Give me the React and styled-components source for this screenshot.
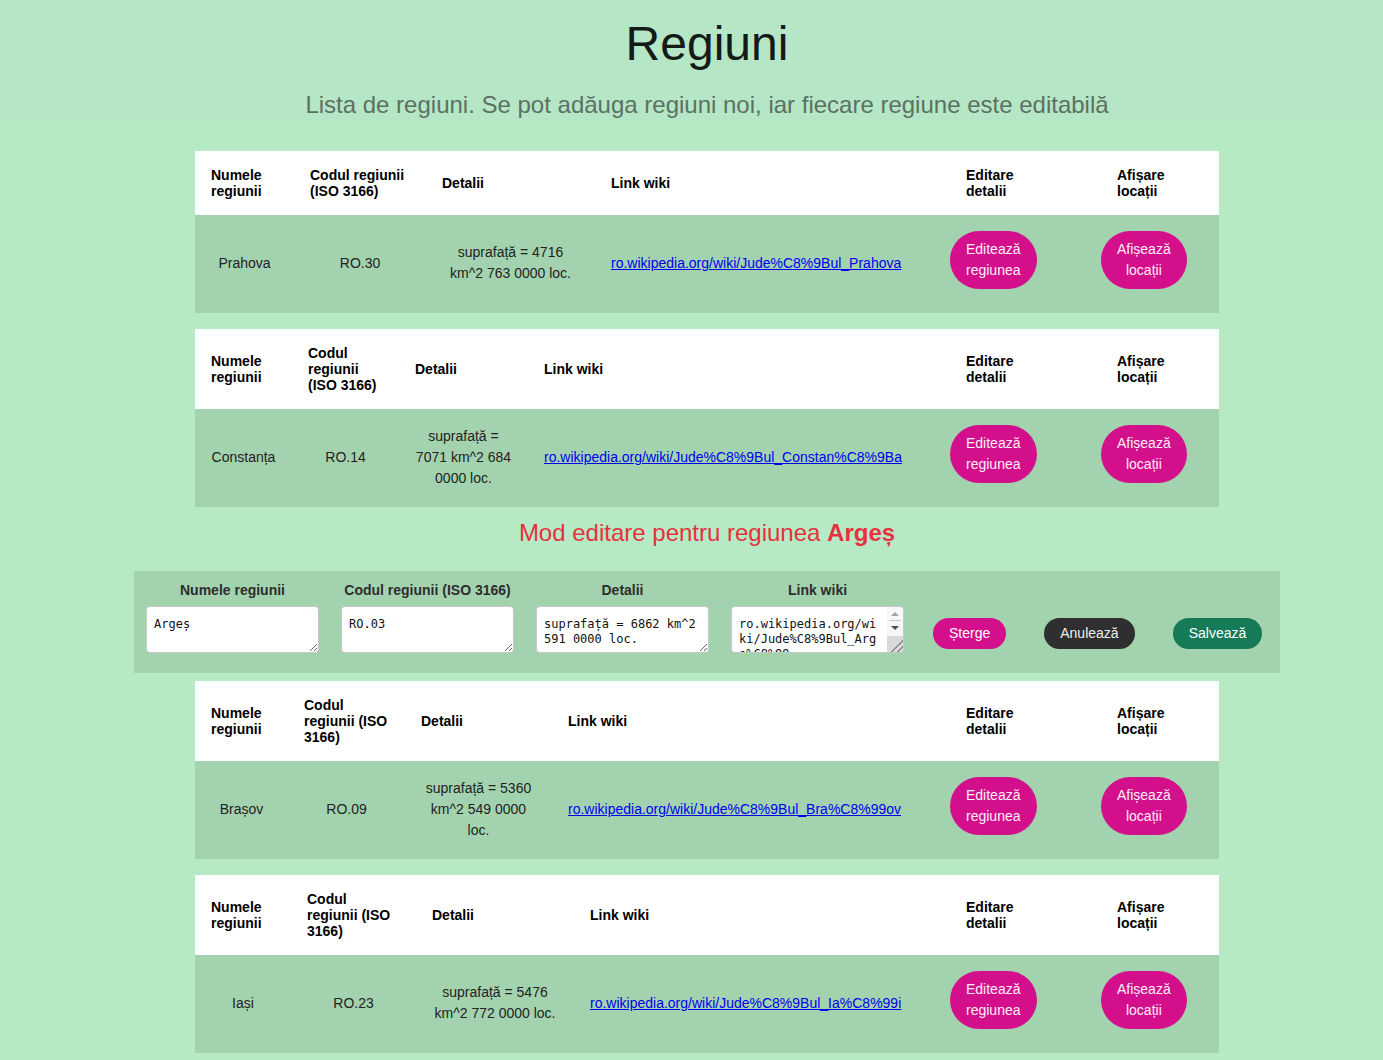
import React from "react";
import styled, { createGlobalStyle } from "styled-components";

const GlobalStyle = createGlobalStyle`
  html { scrollbar-width: none; }
  html::-webkit-scrollbar { display: none; }
  body {
    margin: 0;
    background: #b6eac4;
    font-family: "Liberation Sans", Arial, sans-serif;
    color: #222;
  }
  * { box-sizing: border-box; }
`;

const Header = styled.header`
  background: #b5e6c5;
  padding: 16px 0 4px 31px;
  text-align: center;
`;

const Title = styled.h1`
  margin: 0;
  font-size: 48px;
  font-weight: normal;
  line-height: 55px;
  color: #141a16;
`;

const Subtitle = styled.p`
  margin: 20px 0 0;
  font-size: 24px;
  line-height: 28px;
  color: #5b7262;
`;

const Main = styled.main`
  padding: 28px 0 0 31px;
  display: flex;
  flex-direction: column;
  align-items: center;
`;

const Table = styled.table`
  width: 1024px;
  table-layout: fixed;
  border-collapse: collapse;
  margin-bottom: ${(p) => p.$mb ?? 16}px;
`;

const HeadRow = styled.tr`
  background: #fff;
`;

const BodyRow = styled.tr`
  background: #a3d3ae;
`;

const Th = styled.th`
  text-align: left;
  vertical-align: middle;
  font-size: 14px;
  line-height: 16px;
  font-weight: bold;
  color: #000;
  padding: 16px;
`;

const ThWrap = styled.span`
  display: inline-block;
  width: min-content;
`;

const Td = styled.td`
  text-align: ${(p) => p.$align || "center"};
  vertical-align: middle;
  font-size: 14px;
  line-height: 21px;
  color: #222;
  padding: ${(p) => (p.$flush ? "16px 16px 16px 0" : "15px 16px 17px")};
`;

const WikiLink = styled.a`
  color: #0000ee;
  text-decoration: underline;
  white-space: nowrap;
`;

const PillButton = styled.button`
  display: block;
  width: min-content;
  margin-bottom: 8px;
  padding: 8px 16px;
  border: none;
  border-radius: 30px;
  background: #d40f8c;
  color: #fdf0f8;
  font-family: "Liberation Sans", Arial, sans-serif;
  font-size: 14px;
  line-height: 21px;
  text-align: center;
  cursor: pointer;
`;

const EditHeading = styled.h2`
  margin: 12px 0 24px;
  font-size: 24px;
  font-weight: normal;
  line-height: 28px;
  color: #e5323f;
  text-align: center;
`;

const EditBar = styled.section`
  width: 1146px;
  background: #a3d3ae;
  padding: 11px 12px 20px;
  display: flex;
  align-items: flex-end;
  margin-bottom: 8px;
`;

const Fields = styled.div`
  display: flex;
  gap: 22px;
`;

const Field = styled.label`
  display: flex;
  flex-direction: column;
  align-items: center;
  width: 173px;
`;

const FieldLabel = styled.span`
  font-size: 14px;
  line-height: 16px;
  font-weight: bold;
  color: #2d2d2d;
  margin-bottom: 8px;
`;

const AreaBox = styled.div`
  position: relative;
  width: 173px;
  height: 47px;
`;

const TextArea = styled.textarea`
  display: block;
  width: 173px;
  height: 47px;
  border: 1px solid #c8c8c8;
  border-radius: 4px;
  background: #fff;
  padding: 10px ${(p) => (p.$scroll ? 23 : 7)}px 6px 7px;
  font-family: "DejaVu Sans Mono", "Liberation Mono", monospace;
  font-size: 12px;
  line-height: 15px;
  color: #111;
  margin: 0;
  overflow: hidden;
`;

const ScrollTrack = styled.div`
  position: absolute;
  top: 1px;
  right: 1px;
  bottom: 1px;
  width: 16px;
  display: flex;
  flex-direction: column;
  align-items: center;
  background: #f7f7f7;
  border-top-right-radius: 3px;
  border-bottom-right-radius: 3px;
  pointer-events: none;
`;

const Arrow = styled.div`
  width: 0;
  height: 0;
  border-left: 4px solid transparent;
  border-right: 4px solid transparent;
  ${(p) =>
    p.$up
      ? "border-bottom: 4px solid #a3a3a3; margin-top: 5px;"
      : "border-top: 4px solid #505050; margin-top: 5px;"}
`;

const Divider = styled.div`
  width: 12px;
  height: 1px;
  background: #c9c9c9;
  margin-top: 4px;
`;

const Thumb = styled.div`
  margin-top: auto;
  width: 16px;
  height: 16px;
  background:
    linear-gradient(135deg, transparent 62%, #8a8a8a 62%, #8a8a8a 67%, transparent 67%, transparent 80%, #8a8a8a 80%, #8a8a8a 85%, transparent 85%),
    #dadada;
  border-bottom-right-radius: 3px;
`;

const Actions = styled.div`
  display: flex;
  gap: 38px;
  margin-left: 29px;
  margin-bottom: 4px;
`;

const ActionButton = styled.button`
  border: none;
  border-radius: 16px;
  padding: 7px 16px;
  min-width: 73px;
  font-family: "Liberation Sans", Arial, sans-serif;
  font-size: 14px;
  line-height: 17px;
  color: ${(p) => (p.$variant === "dark" ? "#eeeeee" : "#fff")};
  background: ${(p) =>
    p.$variant === "dark" ? "#2f2f2f" : p.$variant === "green" ? "#177a57" : "#d40f8c"};
  cursor: pointer;
`;

const before = [
  {
    name: "Prahova",
    code: "RO.30",
    details: "suprafață = 4716 km^2 763 0000 loc.",
    link: "ro.wikipedia.org/wiki/Jude%C8%9Bul_Prahova",
    cols: [99, 132, 169, 355, 151, 118],
  },
  {
    name: "Constanța",
    code: "RO.14",
    details: "suprafață = 7071 km^2 684 0000 loc.",
    link: "ro.wikipedia.org/wiki/Jude%C8%9Bul_Constan%C8%9Ba",
    cols: [97, 107, 129, 422, 151, 118],
  },
];

const after = [
  {
    name: "Brașov",
    code: "RO.09",
    details: "suprafață = 5360 km^2 549 0000 loc.",
    link: "ro.wikipedia.org/wiki/Jude%C8%9Bul_Bra%C8%99ov",
    cols: [93, 117, 147, 398, 151, 118],
  },
  {
    name: "Iași",
    code: "RO.23",
    details: "suprafață = 5476 km^2 772 0000 loc.",
    link: "ro.wikipedia.org/wiki/Jude%C8%9Bul_Ia%C8%99i",
    cols: [96, 125, 158, 376, 151, 118],
  },
];

const fields = [
  { label: "Numele regiunii", value: "Argeș" },
  { label: "Codul regiunii (ISO 3166)", value: "RO.03" },
  { label: "Detalii", value: "suprafață = 6862 km^2 591 0000 loc." },
  { label: "Link wiki", value: "ro.wikipedia.org/wiki/Jude%C8%9Bul_Arge%C8%99", scroll: true },
];

function RegionTable({ r, mb }) {
  return (
    <Table $mb={mb}>
      <colgroup>
        {r.cols.map((w, i) => (
          <col key={i} style={{ width: w }} />
        ))}
      </colgroup>
      <thead>
        <HeadRow>
          <Th>Numele regiunii</Th>
          <Th>Codul regiunii (ISO 3166)</Th>
          <Th>Detalii</Th>
          <Th>Link wiki</Th>
          <Th>
            <ThWrap>Editare detalii</ThWrap>
          </Th>
          <Th>
            <ThWrap>Afișare locații</ThWrap>
          </Th>
        </HeadRow>
      </thead>
      <tbody>
        <BodyRow>
          <Td>{r.name}</Td>
          <Td>{r.code}</Td>
          <Td>{r.details}</Td>
          <Td $align="left">
            <WikiLink href="#">{r.link}</WikiLink>
          </Td>
          <Td $align="left" $flush>
            <PillButton>Editează regiunea</PillButton>
          </Td>
          <Td $align="left" $flush>
            <PillButton>Afișează locații</PillButton>
          </Td>
        </BodyRow>
      </tbody>
    </Table>
  );
}

export default function App() {
  return (
    <>
      <GlobalStyle />
      <Header>
        <Title>Regiuni</Title>
        <Subtitle>
          Lista de regiuni. Se pot adăuga regiuni noi, iar fiecare regiune este editabilă
        </Subtitle>
      </Header>
      <Main>
        {before.map((r, i) => (
          <RegionTable key={r.code} r={r} mb={i === before.length - 1 ? 0 : 16} />
        ))}
        <EditHeading>
          Mod editare pentru regiunea <strong>Argeș</strong>
        </EditHeading>
        <EditBar>
          <Fields>
            {fields.map((f) => (
              <Field key={f.label}>
                <FieldLabel>{f.label}</FieldLabel>
                <AreaBox>
                  <TextArea defaultValue={f.value} $scroll={f.scroll} />
                  {f.scroll && (
                    <ScrollTrack>
                      <Arrow $up />
                      <Divider />
                      <Arrow />
                      <Thumb />
                    </ScrollTrack>
                  )}
                </AreaBox>
              </Field>
            ))}
          </Fields>
          <Actions>
            <ActionButton>Șterge</ActionButton>
            <ActionButton $variant="dark">Anulează</ActionButton>
            <ActionButton $variant="green">Salvează</ActionButton>
          </Actions>
        </EditBar>
        {after.map((r) => (
          <RegionTable key={r.code} r={r} />
        ))}
      </Main>
    </>
  );
}
